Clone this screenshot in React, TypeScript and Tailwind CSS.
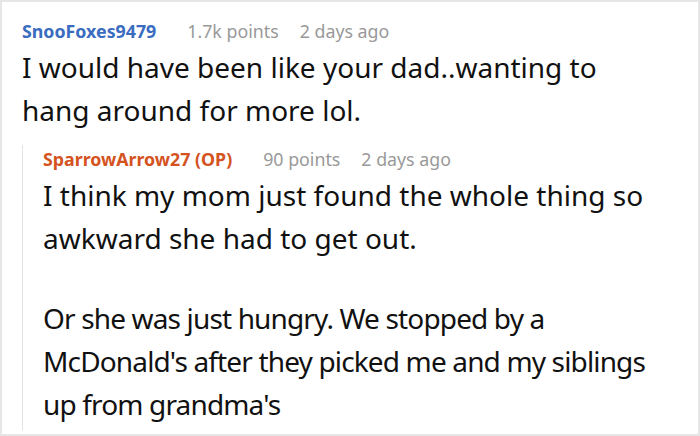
import React from 'react';

const Meta = ({ name, nameColor, points, time }: { name: string; nameColor: string; points: string; time: string }) => (
  <div className="flex items-baseline text-[17.8px] leading-[24px]">
    <span className={`font-bold ${nameColor}`}>{name}</span>
    <span className="text-[#999999] ml-[31px]">{points}</span>
    <span className="text-[#999999] ml-[21px]">{time}</span>
  </div>
);

const App: React.FC = () => {
  return (
    <div className="w-[700px] h-[436px] bg-white border-2 border-[#e6e6e6] overflow-hidden" style={{ fontFamily: '"Noto Sans", "Open Sans", sans-serif' }}>
      <div className="pl-5 pt-[17px]">
        <Meta name="SnooFoxes9479" nameColor="text-[#3a6cc0]" points="1.7k points" time="2 days ago" />
        <div className="text-[28px] leading-[43px] text-[#111111] mt-[3px]">
          <p>I would have been like your dad..wanting to</p>
          <p>hang around for more lol.</p>
        </div>
        <div className="mt-[11px] flex">
          <div className="w-px bg-[#e3e3e3] mt-[2px] mb-[-4px]" />
          <div className="pl-5 pt-[4px]">
            <Meta name="SparrowArrow27 (OP)" nameColor="text-[#d4531f]" points="90 points" time="2 days ago" />
            <div className="text-[28px] leading-[42.5px] text-[#111111] mt-[3px]">
              <p>I think my mom just found the whole thing so</p>
              <p>awkward she had to get out.</p>
              <div className="mt-[38px] leading-[43px] tracking-[-0.85px]">
                <p>Or she was just hungry. We stopped by a</p>
                <p>McDonald's after they picked me and my siblings</p>
                <p>up from grandma's</p>
              </div>
            </div>
          </div>
        </div>
      </div>
    </div>
  );
};

export default App;
